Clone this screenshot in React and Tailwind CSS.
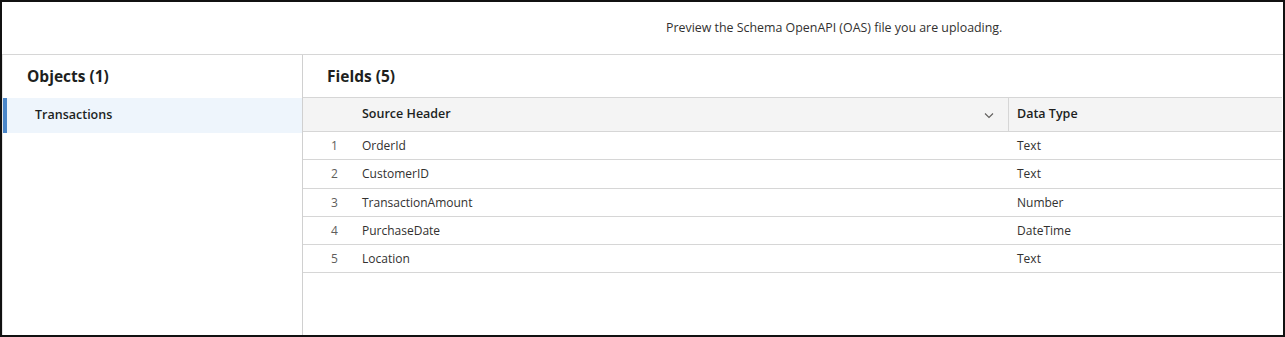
import React from 'react';

const fields=[
  {name: 'OrderId',type: 'Text'},
  {name: 'CustomerID',type: 'Text'},
  {name: 'TransactionAmount',type: 'Number'},
  {name: 'PurchaseDate',type: 'DateTime'},
  {name: 'Location',type: 'Text'},
];

function Chevron() {
  return (
    <svg width="12" height="12" viewBox="0 0 12 12" fill="none" stroke="#605e5c" strokeWidth="1.1">
      <path d="M2 4.5 L6 8.5 L10 4.5" />
    </svg>
  );
}

export default function App() {
  return (
    <div className="w-[1285px] h-[337px] bg-white border-2 border-[#111] flex flex-col text-[#323130]" style={{fontFamily: '"Open Sans", "Noto Sans", sans-serif'}}>
      <div className="h-[53px] shrink-0 flex items-center pl-[664px] border-b border-[#d6d6d6] text-[12.4px]">
        Preview the Schema OpenAPI (OAS) file you are uploading.
      </div>
      <div className="flex flex-1 min-h-0">
        <div className="w-[301px] shrink-0 border-r border-[#d0d0d0] border-l border-l-[#e5e5e5]">
          <div className="h-[43px] pl-[24px] flex items-center text-[15.5px] font-bold text-[#201f1e]">
            Objects (1)
          </div>
          <div className="h-[35px] bg-[#eef5fc] border-l-4 border-[#4a86c8] pl-[28px] flex items-center text-[12.5px] font-semibold text-[#201f1e]">
            Transactions
          </div>
        </div>
        <div className="flex-1 pr-[1px]">
          <div className="h-[42px] pl-[24px] pt-[1px] flex items-center text-[15.5px] font-bold text-[#201f1e]">
            Fields (5)
          </div>
          <div className="h-[35px] bg-[#f4f4f4] border-y border-[#d6d6d6] flex items-center text-[12.5px] font-semibold text-[#201f1e]">
            <div className="w-[59px] shrink-0" />
            <div className="w-[646px] shrink-0 flex items-center justify-between pr-[13px] h-full">
              <span>Source Header</span>
              <Chevron />
            </div>
            <div className="h-full border-l border-[#d6d6d6] pl-[8px] flex items-center">Data Type</div>
          </div>
          {fields.map((f,i) => (
            <div key={f.name} className="h-[28.3px] border-b border-[#d6d6d6] flex items-center pt-[1px] text-[12px]">
              <div className="w-[59px] shrink-0 pl-[28px] text-[#605e5c]">{i+1}</div>
              <div className="w-[646px] shrink-0">{f.name}</div>
              <div className="pl-[9px]">{f.type}</div>
            </div>
          ))}
        </div>
      </div>
    </div>
  );
}
